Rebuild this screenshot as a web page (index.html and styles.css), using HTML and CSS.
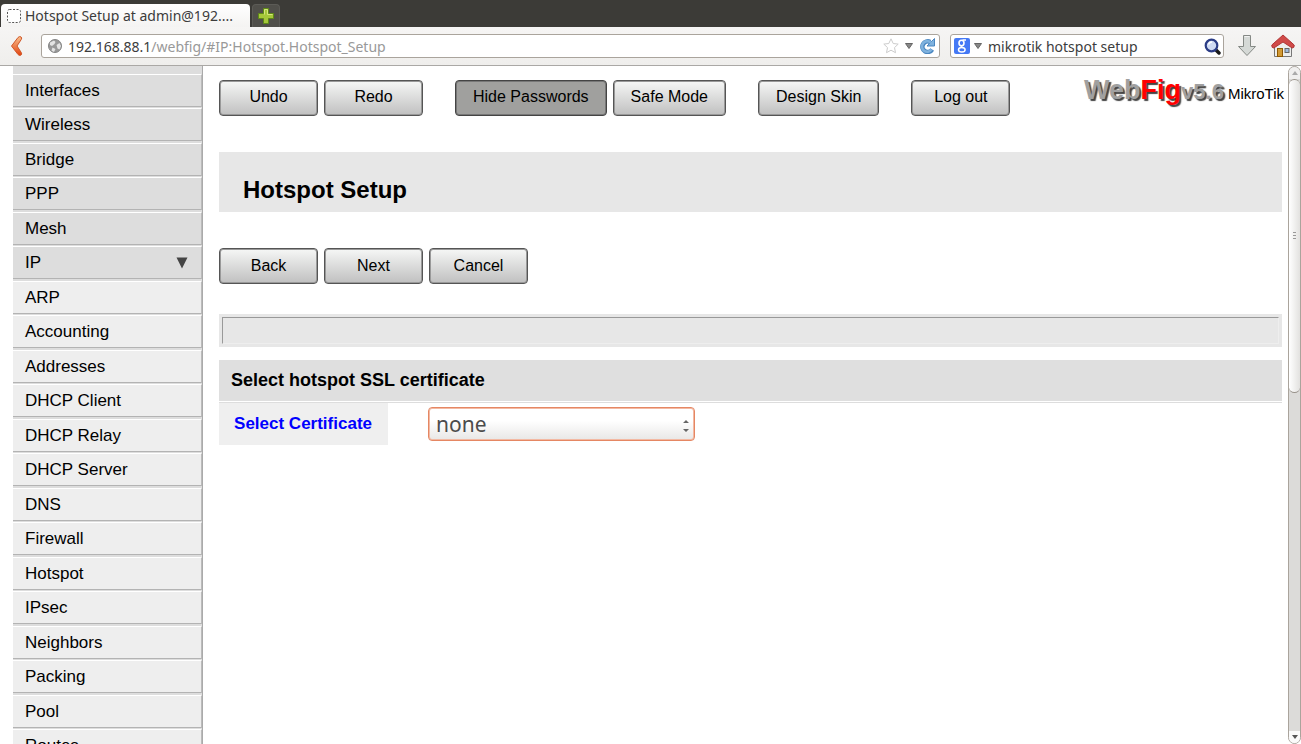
FILE: index.html
```html
<!DOCTYPE html>
<html lang="en">
<head>
    <meta charset="UTF-8">
    <meta name="viewport" content="width=device-width, initial-scale=1.0">
    <title>Hotspot Setup at admin@192.168.88.1</title>
    <link rel="stylesheet" href="styles.css">
</head>
<body>
    <header class="browser">
        <div class="tabs">
            <button class="tab" type="button">
                <svg width="14" height="14" viewBox="0 0 14 14"><rect x="0.5" y="0.5" width="13" height="13" rx="2" fill="#fff" stroke="#555" stroke-dasharray="2 1.5"/></svg>
                <span>Hotspot Setup at admin@192....</span>
            </button>
            <button class="new-tab" type="button" aria-label="New tab">
                <svg width="16" height="16" viewBox="0 0 16 16"><path d="M5.5 0.5h5v5h5v5h-5v5h-5v-5h-5v-5h5z" fill="#a5c83a" stroke="#5f8a17"/><path d="M6.5 6.500V1.500h3v5h5" fill="none" stroke="#d3e87c"/></svg>
            </button>
        </div>
        <div class="toolbar">
            <button class="icon-btn back" type="button" aria-label="Back">
                <svg width="14" height="22" viewBox="0 0 14 22">
                    <defs><linearGradient id="orange" x1="0" y1="0" x2="0" y2="1"><stop offset="0" stop-color="#f9c08e"/><stop offset="1" stop-color="#e2430f"/></linearGradient></defs>
                    <path d="M8 2.500q1.500-1.500 3-.6 1.200 1 .3 2.500L7 11l4.300 6.600q.9 1.500-.3 2.500-1.500.9-3-.6L1.500 11z" fill="url(#orange)" stroke="#d0582a"/>
                </svg>
            </button>
            <div class="field address">
                <svg width="14" height="14" viewBox="0 0 14 14"><circle cx="7" cy="7" r="6.500" fill="#999" stroke="#858585"/><path d="M2 3.500L6 1.500l1.500 1.500-1 2L4 7 2 6zM8.500 6l3-2 1.500 3-1.500 3.500-2-1zM4.500 8.500L7.500 10 6 13l-2.500-1.500z" fill="#e4e4e4"/></svg>
                <p class="url" aria-label="Address">192.168.88.1<span>/webfig/#IP:Hotspot.Hotspot_Setup</span></p>
                <svg width="16" height="16" viewBox="0 0 16 16"><path d="M8 .8l2.200 4.700 5 .6-3.700 3.500 1 5.100L8 12.200l-4.500 2.500 1-5.100L.8 6.100l5-.6z" fill="#fff" stroke="#ccc"/></svg>
                <svg width="8" height="6" viewBox="0 0 8 6"><path d="M0.500 0.500h7L4 5.500z" fill="#888" stroke="#666"/></svg>
                <svg width="16" height="16" viewBox="0 0 16 16"><path d="M13.200 11.500A5.300 5.300 0 1 1 11.200 4" fill="none" stroke="#4a86c0" stroke-width="4.500"/><path d="M15.500 0.500v7.500H8z" fill="#7fb2de" stroke="#4a86c0"/><path d="M12.600 11.500A5.300 5.300 0 1 1 11.800 4.500" fill="none" stroke="#7fb2de" stroke-width="2.600"/></svg>
            </div>
            <div class="field search">
                <svg width="16" height="16" viewBox="0 0 16 16"><rect width="16" height="16" rx="2" fill="#4579f5"/><ellipse cx="7.500" cy="5" rx="2.500" ry="2.800" fill="none" stroke="#fff" stroke-width="1.600"/><ellipse cx="7.800" cy="11.800" rx="3.300" ry="2.300" fill="none" stroke="#fff" stroke-width="1.500"/><path d="M8.500 2h3.500M7 8q0 1 2 1.500" fill="none" stroke="#fff" stroke-width="1.400"/></svg>
                <svg width="8" height="6" viewBox="0 0 8 6"><path d="M0.500 0.500h7L4 5.500z" fill="#888" stroke="#666"/></svg>
                <input type="text" value="mikrotik hotspot setup" aria-label="Search">
                <svg width="17" height="17" viewBox="0 0 17 17"><path d="M11.500 11.500l3.500 3.500" stroke="#1a1a1a" stroke-width="3.500" stroke-linecap="round"/><circle cx="7.500" cy="7.500" r="5.800" fill="#cfdaf2" stroke="#2b3c85" stroke-width="2.200"/><path d="M4.500 6.500q1-2.500 3.500-2.500" stroke="#fff" fill="none" stroke-width="1.500"/></svg>
            </div>
            <button class="icon-btn download" type="button" aria-label="Downloads">
                <svg width="18" height="22" viewBox="0 0 18 22"><path d="M5.500 0.500h7v11h5L9 20.500.5 11.500h5z" fill="#d5d9d6" stroke="#858985"/><path d="M6.500 1.500h5" stroke="#f2f2f2"/></svg>
            </button>
            <button class="icon-btn home" type="button" aria-label="Home">
                <svg width="24" height="24" viewBox="0 0 24 24">
                    <path d="M3.500 12L12 5l8.500 7v10.500h-17z" fill="#eeeeec" stroke="#777"/>
                    <rect x="6.500" y="14.500" width="5" height="8" fill="#d29a35" stroke="#8f5902"/>
                    <rect x="14" y="14.500" width="4" height="4" fill="#9dbbe0" stroke="#666"/>
                    <path d="M12 1L.8 11q-.3 3 2 3L12 8l9.200 6q2.300 0 2-3z" fill="#d04a48" stroke="#b03535"/>
                </svg>
            </button>
        </div>
    </header>

    <div class="page">
        <nav class="sidebar">
            <ul class="menu">
                <li><a href="#Interfaces">Interfaces</a></li>
                <li><a href="#Wireless">Wireless</a></li>
                <li><a href="#Bridge">Bridge</a></li>
                <li><a href="#PPP">PPP</a></li>
                <li><a href="#Mesh">Mesh</a></li>
                <li><a href="#IP">IP <svg width="12" height="12" viewBox="0 0 12 12"><path d="M0.500 0.500h11L6 11.500z" fill="#444"/></svg></a></li>
                <li class="sub"><a href="#IP:ARP">ARP</a></li>
                <li class="sub"><a href="#IP:Accounting">Accounting</a></li>
                <li class="sub"><a href="#IP:Addresses">Addresses</a></li>
                <li class="sub"><a href="#IP:DHCP_Client">DHCP Client</a></li>
                <li class="sub"><a href="#IP:DHCP_Relay">DHCP Relay</a></li>
                <li class="sub"><a href="#IP:DHCP_Server">DHCP Server</a></li>
                <li class="sub"><a href="#IP:DNS">DNS</a></li>
                <li class="sub"><a href="#IP:Firewall">Firewall</a></li>
                <li class="sub"><a href="#IP:Hotspot">Hotspot</a></li>
                <li class="sub"><a href="#IP:IPsec">IPsec</a></li>
                <li class="sub"><a href="#IP:Neighbors">Neighbors</a></li>
                <li class="sub"><a href="#IP:Packing">Packing</a></li>
                <li class="sub"><a href="#IP:Pool">Pool</a></li>
                <li class="sub"><a href="#IP:Routes">Routes</a></li>
            </ul>
        </nav>

        <main class="content">
            <div class="topbar">
                <div class="group">
                    <button class="btn" type="button">Undo</button>
                    <button class="btn" type="button">Redo</button>
                </div>
                <div class="group">
                    <button class="btn pressed" type="button" aria-pressed="true">Hide Passwords</button>
                    <button class="btn" type="button">Safe Mode</button>
                </div>
                <button class="btn" type="button">Design Skin</button>
                <button class="btn" type="button">Log out</button>
                <div class="brand">
                    <span class="logo">Web<em>Fig</em><small>v5.6</small></span>
                    <a href="#MikroTik">MikroTik</a>
                </div>
            </div>

            <h1 class="title">Hotspot Setup</h1>

            <div class="group wizard">
                <button class="btn" type="button">Back</button>
                <button class="btn" type="button">Next</button>
                <button class="btn" type="button">Cancel</button>
            </div>

            <div class="status"><div class="status-inner"></div></div>

            <h2 class="section">Select hotspot SSL certificate</h2>
            <div class="row">
                <label for="certificate">Select Certificate</label>
                <div class="select">
                    <select id="certificate">
                        <option>none</option>
                    </select>
                    <svg width="6" height="14" viewBox="0 0 6 14"><path d="M0 4h6L3 1zM0 10h6L3 13z" fill="#666"/></svg>
                </div>
            </div>
        </main>

        <div class="scrollbar">
            <div class="cap"><svg width="6" height="4" viewBox="0 0 6 4"><path d="M0 4h6L3 0z" fill="#aaa"/></svg></div>
            <div class="thumb"><svg width="3" height="8" viewBox="0 0 3 8"><path d="M0 .5h3M0 3.500h3M0 6.500h3" stroke="#999"/></svg></div>
            <div class="track"></div>
            <div class="cap end"><svg width="6" height="4" viewBox="0 0 6 4"><path d="M0 0h6L3 4z" fill="#555"/></svg></div>
        </div>
    </div>
</body>
</html>
```
FILE: styles.css
```css
* { box-sizing: border-box; }
body {
    margin: 0;
    height: 100vh;
    display: flex;
    flex-direction: column;
    overflow: hidden;
    background: #fff;
    color: #000;
    font-family: "Liberation Sans", Arial, sans-serif;
    font-size: 17px;
}
button, input, select { font: inherit; color: inherit; }
svg { display: block; flex: none; }

/* browser window */
.browser {
    flex: none;
    font-family: "Noto Sans", "Open Sans", sans-serif;
    font-size: 14px;
    color: #3c3c3c;
}
.tabs {
    display: flex;
    gap: 2px;
    height: 27px;
    padding: 4px 1px 0;
    background: #3c3b37;
}
.tab {
    display: flex;
    align-items: center;
    gap: 4px;
    width: 249px;
    padding: 0 6px;
    border: 0;
    border-radius: 4px 4px 0 0;
    background: linear-gradient(#fff, #f4f3f2);
    white-space: nowrap;
}
.new-tab {
    display: flex;
    align-items: center;
    justify-content: center;
    width: 28px;
    padding: 0;
    border: 1px solid #5c5b56;
    border-bottom: 0;
    border-radius: 4px 4px 0 0;
    background: #504f4a;
}
.toolbar {
    display: flex;
    align-items: center;
    height: 39px;
    padding: 0 6px 0 10px;
    background: linear-gradient(#f6f5f4, #efeeec);
    border-bottom: 1px solid #aaa8a5;
}
.icon-btn { padding: 0; border: 0; background: none; }
.field {
    display: flex;
    align-items: center;
    height: 24px;
    border: 1px solid #aaa49c;
    border-radius: 3px;
    background: #fff;
}
.address { flex: 1; gap: 6px; margin-left: 17px; padding: 0 4px 0 6px; }
.url { flex: 1; margin: 0; white-space: nowrap; }
.url span { color: #999; }
.search { width: 274px; gap: 4px; margin: 0 14px 0 10px; padding: 0 2px 0 3px; }
.search input {
    flex: 1;
    min-width: 0;
    padding: 0 2px;
    border: 0;
    outline: 0;
    background: none;
}
.home { margin-left: 15px; }

.page { flex: 1; display: flex; min-height: 0; }

/* left menu */
.sidebar {
    flex: none;
    width: 190px;
    margin-left: 13px;
    padding-top: 8px;
    overflow: hidden;
    background: #ddd;
    border-right: 1px solid #aaa;
}
.menu { list-style: none; margin: 0; padding: 0; }
.menu li { height: 34px; }
.menu li:nth-child(even) { height: 35px; }
.menu a {
    display: flex;
    align-items: center;
    justify-content: space-between;
    height: 33px;
    padding: 0 13px 0 12px;
    border: 1px solid;
    border-color: #fff #bbb #b3b3b3 #ddd;
    border-left: 0;
    background: #ddd;
    color: #000;
    text-decoration: none;
}
.menu .sub a { background: #eee; }

/* main area */
.content { flex: 1; min-width: 0; padding: 14px 6px 0 16px; }
.topbar { display: flex; align-items: flex-start; gap: 32px; }
.group { display: flex; gap: 6px; }
.btn {
    min-width: 99px;
    height: 36px;
    padding: 0 17px 2px;
    border: 1px solid #555;
    border-radius: 4px;
    background: linear-gradient(#f6f7f6, #c0c0c0);
    box-shadow: inset 0 0 0 1px #999;
    font-size: 16px;
    white-space: nowrap;
}
.btn.pressed { background: #a0a09e; border-color: #444; box-shadow: inset 0 0 0 1px #777; }
.brand {
    display: flex;
    align-items: baseline;
    gap: 4px;
    margin-left: auto;
    margin-right: -2px;
}
.brand a { color: #000; font-size: 15px; text-decoration: none; }
.logo {
    color: #a0a0a0;
    font-size: 27px;
    line-height: 20px;
    font-weight: bold;
    text-shadow: 2px 2px 1px #444;
}
.logo em { color: #f00; font-style: normal; }
.logo small { font-size: 22px; }

.title {
    margin: 36px 0;
    padding: 24px 24px 8px;
    background: #e7e7e7;
    font-size: 24px;
    line-height: 28px;
}
.wizard .btn { padding-bottom: 0; }
.status { margin: 30px 0 13px; padding: 3px; background: #e7e7e7; }
.status-inner {
    height: 27px;
    border: 1px solid;
    border-color: #999 #eee #eee #999;
}
.section {
    margin: 0 0 1px;
    padding: 0 12px;
    background: #dfdfdf;
    font-size: 18px;
    line-height: 41px;
}
.row {
    display: flex;
    align-items: center;
    gap: 40px;
    border-top: 1px solid #ddd;
}
.row label {
    width: 169px;
    padding-right: 16px;
    background: #efefef;
    color: #00f;
    font-weight: bold;
    line-height: 42px;
    text-align: right;
}
.select { position: relative; width: 267px; }
.select select {
    display: block;
    width: 100%;
    height: 34px;
    padding: 0 20px 0 7px;
    appearance: none;
    border: 1px solid #e58763;
    border-radius: 4px;
    background: linear-gradient(#fff 40%, #e8e7e6);
    box-shadow: inset 0 0 0 1px #f3b9a3;
    color: #4c4c4c;
    font-family: "Noto Sans", "Open Sans", sans-serif;
    font-size: 21px;
    line-height: 28px;
}
.select svg { position: absolute; right: 6px; top: 12px; pointer-events: none; }

/* scrollbar */
.scrollbar {
    flex: none;
    display: flex;
    flex-direction: column;
    width: 13px;
    background: #dcdbd9;
    border: 1px solid #aaa49c;
    border-radius: 7px;
}
.cap {
    display: flex;
    align-items: center;
    justify-content: center;
    height: 12px;
    border-radius: 6px 6px 0 0;
    background: #f0efee;
}
.cap.end { border-radius: 0 0 6px 6px; background: #fafafa; }
.thumb {
    display: flex;
    align-items: center;
    justify-content: center;
    flex: 48;
    border: 1px solid #98928a;
    border-width: 1px 0;
    border-radius: 6px;
    background: linear-gradient(to right, #fff, #e2e1df);
}
.track { flex: 52; }
```
